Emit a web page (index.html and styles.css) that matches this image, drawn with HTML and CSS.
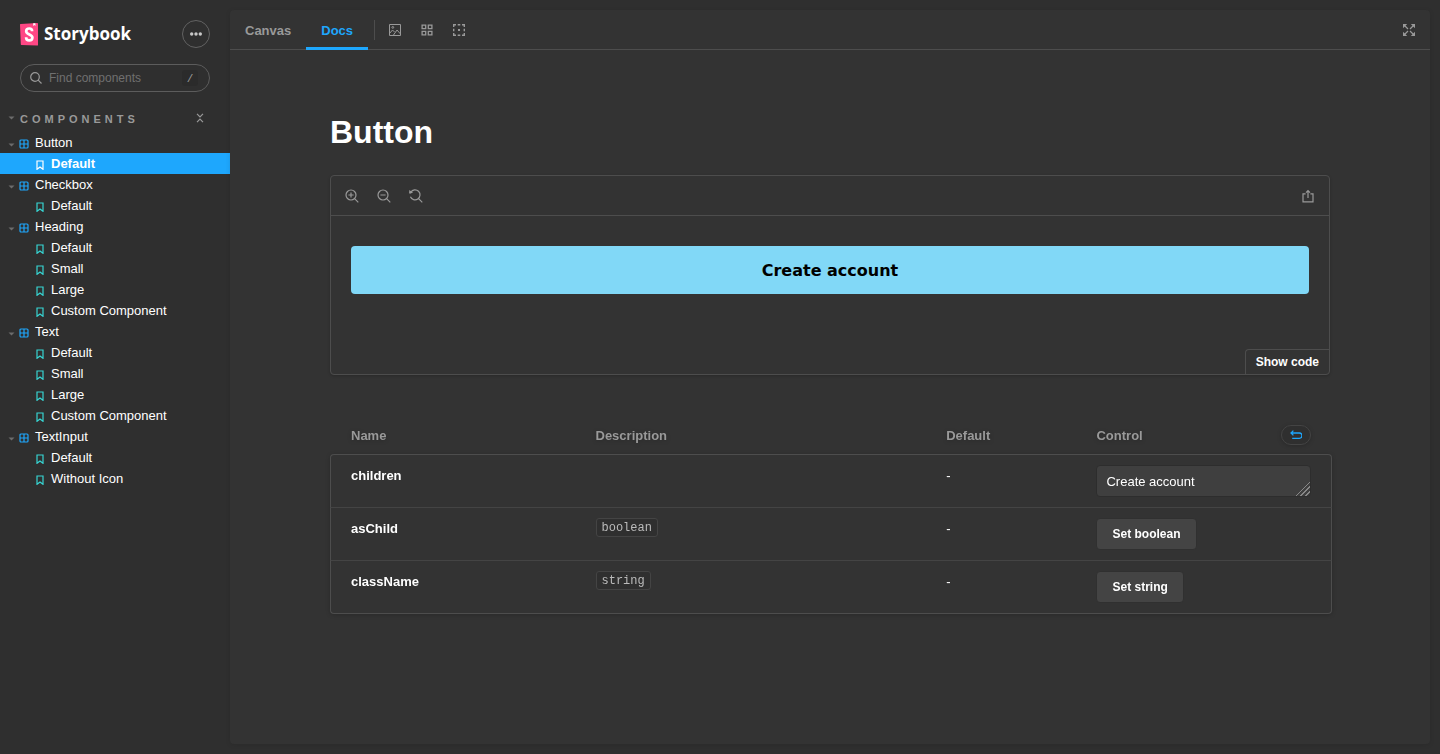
FILE: index.html
```
<!DOCTYPE html>
<html lang="en">
<head>
<meta charset="utf-8">
<title>Button - Docs - Storybook</title>
<link rel="stylesheet" href="styles.css">
</head>
<body>
<svg class="sprite" aria-hidden="true">
  <symbol id="caret" viewBox="0 0 6 4"><path d="M0 0.5h6L3 3.5z" fill="currentColor"/></symbol>
  <symbol id="component" viewBox="0 0 10 10"><rect x="1" y="1" width="8" height="8" rx="1" fill="none" stroke="currentColor" stroke-width="1.200"/><path d="M5 1v8M1 5h8" stroke="currentColor" stroke-width="1.200"/></symbol>
  <symbol id="bookmark" viewBox="0 0 10 10"><path d="M2 1h6v8.300L5 7 2 9.300z" fill="none" stroke="currentColor" stroke-width="1.200"/></symbol>
</svg>
<div class="app">
  <aside class="sidebar">
    <header class="brand-row">
      <a class="brand" href="#">
        <svg width="19" height="23" viewBox="0 0 19 23" aria-hidden="true"><path d="M0 1.600Q0 1.100.6 1L17.300.1Q18 .1 18 .8V21.900Q18 22.600 17.300 22.600L1.400 21.900Q.8 21.800.8 21.200z" fill="#ff4785"/><path d="M13.200.3l2.200-.1.1 2.700-1-.8-1.300 1z" fill="#fff"/><path d="M12.100 8.300C12.100 6.300 11.100 5.500 9.300 5.500S6.200 6.500 6.200 8.200c0 3.600 6.200 2.900 6.200 6.300 0 1.900-1.200 2.900-3.100 2.900s-3.200-1-3.200-3.200" fill="none" stroke="#fff" stroke-width="2.700"/></svg>
        <span>Storybook</span>
      </a>
      <button class="menu-button" aria-label="Shortcuts"><svg width="12" height="4" viewBox="0 0 12 4"><circle cx="1.700" cy="2" r="1.700"/><circle cx="6" cy="2" r="1.700"/><circle cx="10.300" cy="2" r="1.700"/></svg></button>
    </header>
    <label class="search">
      <svg width="12" height="12" viewBox="0 0 12 12" aria-hidden="true"><circle cx="5" cy="5" r="4.300"/><path d="M8.200 8.200l3.300 3.300"/></svg>
      <input type="text" placeholder="Find components" aria-label="Find components">
      <kbd>/</kbd>
    </label>
    <div class="section-heading">
      <button class="section-toggle"><svg class="caret"><use href="#caret"/></svg>Components</button>
      <button class="collapse" aria-label="Collapse all"><svg width="8" height="10" viewBox="0 0 8 10"><path d="M1 .8l3 3 3-3M1 9.200l3-3 3 3"/></svg></button>
    </div>
    <nav>
      <ul class="tree">
        <li><a class="group" href="#"><svg class="caret"><use href="#caret"/></svg><svg class="icon"><use href="#component"/></svg>Button</a></li>
        <li><a class="story selected" href="#"><svg class="icon"><use href="#bookmark"/></svg>Default</a></li>
        <li><a class="group" href="#"><svg class="caret"><use href="#caret"/></svg><svg class="icon"><use href="#component"/></svg>Checkbox</a></li>
        <li><a class="story" href="#"><svg class="icon"><use href="#bookmark"/></svg>Default</a></li>
        <li><a class="group" href="#"><svg class="caret"><use href="#caret"/></svg><svg class="icon"><use href="#component"/></svg>Heading</a></li>
        <li><a class="story" href="#"><svg class="icon"><use href="#bookmark"/></svg>Default</a></li>
        <li><a class="story" href="#"><svg class="icon"><use href="#bookmark"/></svg>Small</a></li>
        <li><a class="story" href="#"><svg class="icon"><use href="#bookmark"/></svg>Large</a></li>
        <li><a class="story" href="#"><svg class="icon"><use href="#bookmark"/></svg>Custom Component</a></li>
        <li><a class="group" href="#"><svg class="caret"><use href="#caret"/></svg><svg class="icon"><use href="#component"/></svg>Text</a></li>
        <li><a class="story" href="#"><svg class="icon"><use href="#bookmark"/></svg>Default</a></li>
        <li><a class="story" href="#"><svg class="icon"><use href="#bookmark"/></svg>Small</a></li>
        <li><a class="story" href="#"><svg class="icon"><use href="#bookmark"/></svg>Large</a></li>
        <li><a class="story" href="#"><svg class="icon"><use href="#bookmark"/></svg>Custom Component</a></li>
        <li><a class="group" href="#"><svg class="caret"><use href="#caret"/></svg><svg class="icon"><use href="#component"/></svg>TextInput</a></li>
        <li><a class="story" href="#"><svg class="icon"><use href="#bookmark"/></svg>Default</a></li>
        <li><a class="story" href="#"><svg class="icon"><use href="#bookmark"/></svg>Without Icon</a></li>
      </ul>
    </nav>
  </aside>

  <main class="panel">
    <div class="toolbar">
      <button class="tab">Canvas</button>
      <button class="tab active">Docs</button>
      <span class="divider"></span>
      <button class="tool" aria-label="Change background"><svg viewBox="0 0 12 12"><path d="M.5.5h11v11H.5zM.5 9.500l3-3.500 2 2M4.500 11l3.500-5 3.500 4"/><circle cx="3.800" cy="3.400" r=".9"/></svg></button>
      <button class="tool" aria-label="Apply grid"><svg viewBox="0 0 12 12"><path d="M1.100 1.100h3.600v3.600H1.100zM7.300 1.100h3.600v3.600H7.300zM1.100 7.300h3.600v3.600H1.100zM7.300 7.300h3.600v3.600H7.300z" stroke-width="1.300"/></svg></button>
      <button class="tool" aria-label="Enable outline"><svg viewBox="0 0 12 12"><path d="M.7 3V.7H3M4.700.7h2.600M9 .7h2.300V3M11.300 4.700v2.600M11.300 9v2.300H9M7.300 11.300H4.700M3 11.300H.7V9M.7 7.300V4.700" stroke-width="1.400"/><path d="M5 5h2v2H5z" class="solid"/></svg></button>
      <button class="tool end" aria-label="Go full screen"><svg viewBox="0 0 12 12"><path d="M1 1l4 4M11 1L7 5M1 11l4-4M11 11L7 7" stroke-width="1.200"/><path class="solid" d="M0 0h4.200L0 4.200zM12 0v4.200L7.800 0zM0 12V7.800L4.200 12zM12 12H7.800L12 7.800z"/></svg></button>
    </div>

    <article class="docs">
      <h1>Button</h1>
      <section class="preview">
        <div class="preview-bar">
          <button class="tool" aria-label="Zoom in"><svg viewBox="0 0 14 14"><circle cx="6" cy="6" r="5"/><path d="M9.600 9.600l3.700 3.700M6 3.400v5.200M3.400 6h5.200"/></svg></button>
          <button class="tool" aria-label="Zoom out"><svg viewBox="0 0 14 14"><circle cx="6" cy="6" r="5"/><path d="M9.600 9.600l3.700 3.700M3.400 6h5.200"/></svg></button>
          <button class="tool" aria-label="Reset zoom"><svg viewBox="0 0 14 14"><path d="M1.800 3.200a5 5 0 1 1-.4 4.600M9.600 9.600l3.700 3.700"/><path class="solid" d="M.3.900l3.700 2.700-3 1.200-.9-.6z"/></svg></button>
          <button class="tool end" aria-label="Open canvas in new tab"><svg viewBox="0 0 14 14"><path d="M4.600 4.800H2v8h10v-8H9.400M7 9V1.600M5 3.600l2-2 2 2"/></svg></button>
        </div>
        <div class="stage"><button class="create">Create account</button></div>
        <button class="show-code">Show code</button>
      </section>

      <table class="args">
        <colgroup><col class="c-name"><col class="c-desc"><col class="c-default"><col class="c-control"></colgroup>
        <thead>
          <tr><th>Name</th><th>Description</th><th>Default</th><th><div class="control-head">Control<button class="reset" aria-label="Reset controls"><svg width="12" height="10" viewBox="0 0 12 10"><path d="M1 3h8.300a2.500 2.500 0 0 1 0 5.300H2.200M3.400.6L1 3l2.400 2.400"/></svg></button></div></th></tr>
        </thead>
        <tbody>
          <tr><th scope="row">children</th><td></td><td>-</td><td><textarea rows="1" aria-label="children">Create account</textarea></td></tr>
          <tr><th scope="row">asChild</th><td><code>boolean</code></td><td>-</td><td><button class="set">Set boolean</button></td></tr>
          <tr><th scope="row">className</th><td><code>string</code></td><td>-</td><td><button class="set">Set string</button></td></tr>
        </tbody>
      </table>
    </article>
  </main>
</div>
</body>
</html>
```
FILE: styles.css
```
* { box-sizing: border-box; }
body { margin: 0; background: #2f2f2f; color: #fff; font: 13px/20px "Liberation Sans", Arial, sans-serif; }
button { margin: 0; padding: 0; border: 0; background: none; color: inherit; font: inherit; cursor: pointer; }
a { color: inherit; text-decoration: none; }
svg { display: block; flex: none; }
.sprite { display: none; }

.app { display: grid; grid-template-columns: 230px minmax(0, 1fr); min-height: 100vh; }

.sidebar { padding: 20px 0; }
.brand-row { display: flex; align-items: center; justify-content: space-between; padding: 0 20px; }
.brand { display: flex; align-items: center; gap: 5px; font: 700 17px/22px "Open Sans", sans-serif; }
.menu-button { display: grid; place-items: center; width: 28px; height: 28px; border: 1px solid #626262; border-radius: 50%; }
.menu-button svg { fill: #c8c8c8; }

.search { display: flex; align-items: center; gap: 7px; height: 28px; margin: 16px 20px 0; padding: 0 11px 0 9px; border: 1px solid #5c5c5c; border-radius: 14px; }
.search svg { fill: none; stroke: #999; stroke-width: 1.2; }
.search input { flex: 1; min-width: 0; padding: 0; border: 0; outline: 0; background: none; color: #fff; font: 12px/16px "Liberation Sans", Arial, sans-serif; }
.search input::placeholder { color: #707070; }
.search kbd { width: 16px; height: 16px; padding-top: 1px; border-radius: 3px; background: #2b2b2b; color: #999; font: 11px/16px "Liberation Mono", monospace; text-align: center; }

.section-heading { display: flex; align-items: center; justify-content: space-between; height: 20px; margin: 16px 26px 4px 8px; color: #999; }
.section-toggle { display: flex; align-items: center; gap: 5px; padding-top: 2px; font-size: 11px; font-weight: 700; letter-spacing: 4px; text-transform: uppercase; }
.section-toggle .caret { margin-bottom: 2px; }
.collapse svg { fill: none; stroke: #999; stroke-width: 1.2; }
.caret { width: 7px; height: 4px; color: #6c6c6c; }

.tree { margin: 0; padding: 0; list-style: none; }
.tree a { display: flex; align-items: center; height: 21px; }
.tree .icon { width: 10px; height: 10px; margin-top: 3px; }
.group { gap: 6px; padding-left: 8px; }
.group .caret { margin: 4px -2px 0 0; }
.group .icon { color: #1ea7fd; }
.story { gap: 6px; padding-left: 35px; }
.story .icon { color: #37d5d3; }
.story.selected { background: #1ea7fd; font-weight: 700; }
.story.selected .icon { color: #fff; }

.panel { margin: 10px 10px 10px 0; border-radius: 4px; background: #333; box-shadow: 0 1px 5px rgba(0, 0, 0, .1); }
.toolbar { display: flex; align-items: center; height: 40px; border-bottom: 1px solid #4d4d4d; }
.tab { height: 40px; padding: 2px 15px 0; border-top: 3px solid transparent; border-bottom: 3px solid transparent; color: #999; font-weight: 700; }
.tab.active { border-bottom-color: #1ea7fd; color: #1ea7fd; }
.divider { width: 1px; height: 20px; margin: 0 6px; background: #4d4d4d; }
.tool { display: grid; place-items: center; width: 28px; height: 28px; margin-right: 4px; }
.tool svg { width: 12px; height: 12px; fill: none; stroke: #999; }
.tool .solid { fill: #999; stroke: none; }
.tool.end { margin: 0 7px 0 auto; }

.docs { max-width: 1040px; margin: 0 auto; padding: 64px 20px; }
h1 { margin: 0 0 25px; font-size: 32px; line-height: 36px; }
.preview { display: flex; flex-direction: column; border: 1px solid #4d4d4d; border-radius: 4px; box-shadow: 0 1px 3px rgba(0, 0, 0, .2); }
.preview-bar { display: flex; align-items: center; height: 40px; padding-left: 7px; border-bottom: 1px solid #4d4d4d; }
.preview-bar .tool svg { width: 14px; height: 14px; stroke-width: 1.2; }
.stage { padding: 30px 20px 55px; }
.create { display: block; width: 100%; height: 48px; padding-top: 2px; border-radius: 4px; background: #81d8f7; color: #000; font: 600 16px/24px "DejaVu Sans", sans-serif; }
.show-code { align-self: flex-end; height: 25px; padding: 0 10px; border: solid #4d4d4d; border-width: 1px 0 0 1px; border-radius: 4px 0 0 0; font-size: 12px; font-weight: 700; }

.args { width: calc(100% + 2px); margin-top: 40px; border-spacing: 0; table-layout: fixed; filter: drop-shadow(0 1px 2px rgba(0, 0, 0, .2)); }
.c-name, .c-control { width: 25%; }
.c-desc { width: 35%; }
.c-default { width: 15%; }
.args th, .args td { padding: 10px 15px; line-height: 22px; text-align: left; vertical-align: top; }
.args tr > :first-child { padding-left: 21px; }
.args tr > :last-child { padding-right: 21px; }
.args thead th { padding-bottom: 7px; color: #999; }
.control-head { display: flex; align-items: flex-start; justify-content: space-between; }
.reset { display: grid; place-items: center; width: 30px; height: 20px; padding-bottom: 1px; border: 1px solid #444; border-radius: 10px; background: #2f2f2f; }
.reset svg { fill: none; stroke: #1ea7fd; stroke-width: 1.3; }
.args tbody th, .args tbody td { border-top: 1px solid #444; background: #333; }
.args tbody tr > :first-child { padding-left: 20px; border-left: 1px solid #4d4d4d; }
.args tbody tr > :last-child { padding-right: 20px; border-right: 1px solid #4d4d4d; }
.args tbody tr:first-child > * { border-top-color: #4d4d4d; }
.args tbody tr:last-child > * { border-bottom: 1px solid #4d4d4d; }
.args tbody tr:first-child > :first-child { border-top-left-radius: 4px; }
.args tbody tr:first-child > :last-child { border-top-right-radius: 4px; }
.args tbody tr:last-child > :first-child { border-bottom-left-radius: 4px; }
.args tbody tr:last-child > :last-child { border-bottom-right-radius: 4px; }
textarea { display: block; width: 100%; height: 32px; padding: 6px 9px 4px; border: 1px solid #2d2d2d; border-radius: 4px; outline: 0; background: #3f3f3f; color: #fff; font: 13px/20px "Liberation Sans", Arial, sans-serif; overflow: hidden; resize: vertical; }
textarea::-webkit-resizer { background: linear-gradient(135deg, transparent 50%, #888 50%, #888 56%, transparent 56%, transparent 66%, #888 66%, #888 72%, transparent 72%, transparent 82%, #888 82%, #888 88%, transparent 88%); }
.set { display: block; height: 32px; padding: 0 15px; border: 1px solid #303030; border-radius: 4px; background: #444; font-size: 12px; font-weight: 700; }
code { display: inline-block; padding: 2px 5px 0; border: 1px solid #444; border-radius: 3px; background: #2f2f2f; color: #bbb; font: 12px/15px "Liberation Mono", monospace; vertical-align: top; }
```
